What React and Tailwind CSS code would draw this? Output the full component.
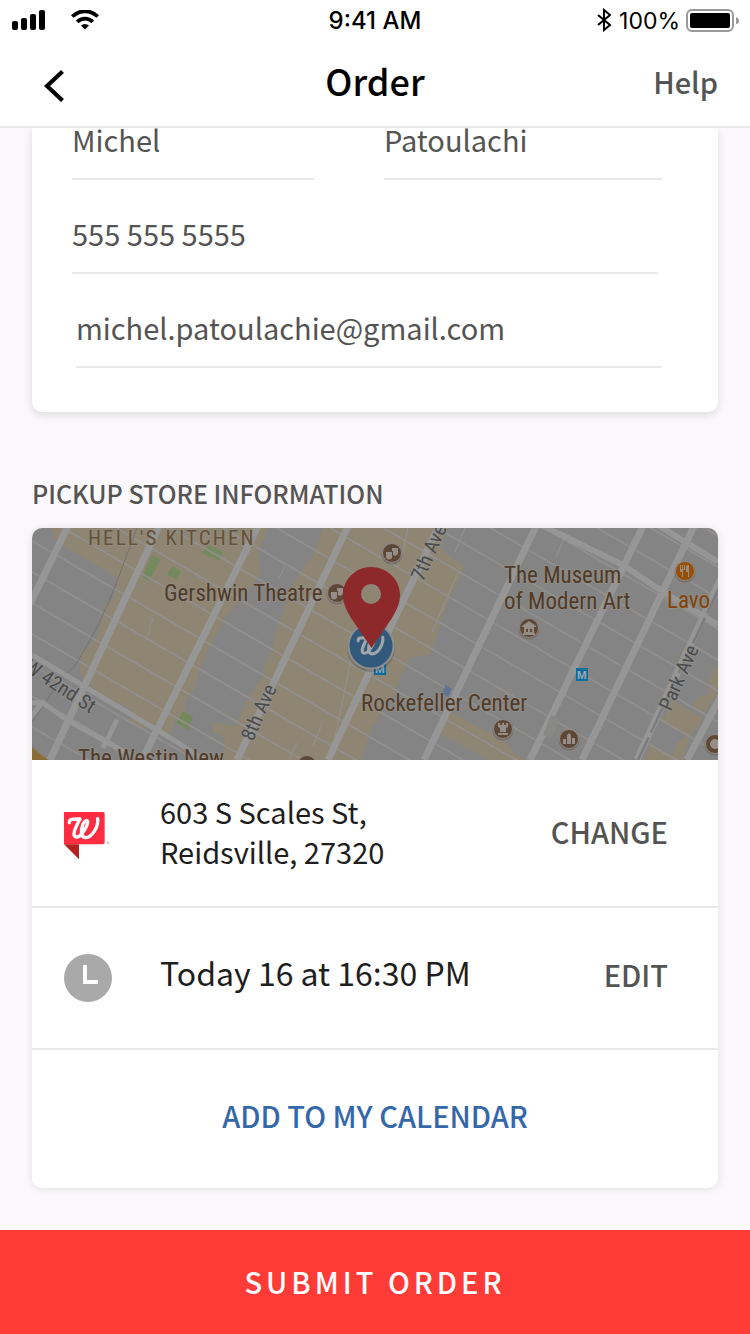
import React from "react";

const STREETS = Array.from({ length: 22 }, (_, i) => -390 + i * 31);

function ScriptW({ width }) {
  return (
    <path
      d="M16 32 C16 20 26 21 48 21 C39 38 30 54 30 65 C30 77 42 79 52 67 C61 56 70 40 71 31 C72 22 63 24 57 36 C49 57 50 77 65 77 C83 77 104 46 101 20"
      fill="none"
      stroke="currentColor"
      strokeWidth={width}
      strokeLinecap="round"
      strokeLinejoin="round"
    />
  );
}

function Poi({ x, y, children, color = "#5d4736" }) {
  return (
    <g transform={`translate(${x} ${y})`}>
      <circle cy="1" r="10.5" fill="#77706a" />
      <circle r="9.5" fill={color} stroke="#8f8983" strokeWidth="1" />
      <g fill="#958d86">{children}</g>
    </g>
  );
}

function Masks() {
  return (
    <>
      <path d="M-6-1h6v4a3 3 0 0 1-6 1z" />
      <path d="M0-5h6v5a3 3 0 0 1-5 2v-4H0z" />
    </>
  );
}

function StoreMap() {
  return (
    <svg viewBox="0 0 686 232" preserveAspectRatio="xMidYMid slice" className="block h-[232px] w-full" role="img" aria-label="Map of the pickup store">
      <rect width="686" height="232" fill="#848484" />
      <g fill="#8e8573">
        <path d="M19 0 25 14 51 29 86 50 81 72 73 74 66 107 56 120 50 122 48 140 50 149 65 164 71 167 100 182 98 195 111 201 118 197 138 207 143 194 153 184 153 174 163 160 168 140 175 124 183 110 190 94 201 80 212 68 228 46 226 26 236 0Z" />
        <path d="M291 0 281 28 265 48 253 78 245 101 241 121 233 135 231 148 216 171 203 198 181 194 180 204 193 210 190 232 328 232 335 214 341 197 350 184 361 167 371 144 378 130 398 127 408 97 415 77 433 40 408 20 416 0Z" />
        <path d="M418 184 468 210 491 232 458 232 406 205Z" />
        <path d="M640 172 671 190 658 210 630 194Z" />
        <path d="M686 137 678 147 676 167 665 169 661 179 671 187 686 164Z" />
        <path d="M618 217 635 227 641 227 645 214 658 207 651 232 613 232Z" />
      </g>
      <g fill="#748a5d">
        <path d="m120 27 9 4-12 22-7-4z" />
        <path d="m141 38 8 5-4 9-10-6z" />
        <path d="m176 17 15 7-3 9-18-8z" />
        <path d="m151 183 10 6-5 13-12-7z" />
      </g>
      <g stroke="#92908f" strokeWidth="1.6">
        {STREETS.map((y) => (
          <path key={y} d={`M0 ${y} 686 ${y + 398}`} />
        ))}
      </g>
      <g fill="none" stroke="#92908f" strokeWidth="1.2">
        <path d="m121 90-4 9 1 4-4 9M376 0l-6 28M433 0l-10 24M428 40l-28 64M323 112l-22 107M290 196l-9 22M265 215l-8 17M532 10l-8 19M253 38l-6 12" />
      </g>
      <path d="M105 0 84 56Q70 94 43 138L30 150 0 194" fill="none" stroke="#747270" />
      <g fill="none" stroke="#969696">
        <path d="M0 127 145 214 172 232M0 175 10 174 35 192 96 226M85 192 71 220M10 175-2 190" strokeWidth="5" />
        <path d="M507-4 591 37 628 62 686 97M624-4 686 34" strokeWidth="6" />
        <path d="M37-4-2 76M128-4 18 232M227-4 110 232" strokeWidth="7" />
        <path d="M317-4 205 232M408-4 361 94 296 232M505-4 392 232M612-4 498 232M663-4 550 232M690 48 605 232M690 166 655 232" strokeWidth="7" />
      </g>
      <path d="M687 60 606 232" stroke="#7c7c7c" strokeWidth="2.5" strokeDasharray="28 5" />
      <path d="m0 219 16 13H0z" fill="#8b6d38" />
      <path d="m414 157 6 4-4 8-6-4z" fill="#5f7396" />
      <path d="M519 187 528 192 519 211 511 207z" fill="#888886" />

      <g fontFamily="'Roboto Condensed', 'Liberation Sans Narrow', Roboto, sans-serif" fill="#4e3b2b" stroke="#969084" strokeWidth="2" strokeOpacity=".65" paintOrder="stroke" strokeLinejoin="round" fontSize="23">
        <text x="56" y="17" fontSize="21" fill="#645139" className="tracking-widest">HELL&apos;S KITCHEN</text>
        <text x="132" y="73">Gershwin Theatre</text>
        <text x="472" y="55">The Museum</text>
        <text x="472" y="81">of Modern Art</text>
        <text x="635" y="80" fill="#7d4309">Lavo</text>
        <text x="329" y="183">Rockefeller Center</text>
        <text x="46" y="238">The Westin New</text>
      </g>
      <g fontFamily="'Roboto Condensed', Roboto, sans-serif" fontSize="20" fill="#4b4b4b" stroke="#939393" strokeWidth="2" strokeOpacity=".6" paintOrder="stroke">
        <text transform="translate(-9 142) rotate(33)">W 42nd St</text>
        <text transform="translate(221 214) rotate(-66)">8th Ave</text>
        <text transform="translate(391 54) rotate(-66)">7th Ave</text>
        <text transform="translate(639 184) rotate(-66)">Park Ave</text>
      </g>

      <Poi x={360} y={25}><Masks /></Poi>
      <Poi x={305} y={65}><Masks /></Poi>
      <Poi x={497} y={100}>
        <path d="m-7-2 7-5 7 5v1H-7zM-6 5H6v2H-6zM-5-1H5v6H-5z" />
        <path d="M-3 1h2v3h-2zM1 1h2v3H1z" fill="#5d4736" />
      </Poi>
      <Poi x={471} y={201}>
        <path d="M-5-6h2v2h2v-2h2v2h2v-2h2v4L3-1 3 3H-3L-3-1-5-2zM-5 4H5v2H-5z" />
      </Poi>
      <Poi x={537} y={211}>
        <path d="M-6 0h3v5h-3zM-2-4 0-6 2-4V5H-2zM3-1h3v6H3z" />
      </Poi>
      <Poi x={683} y={216}><circle r="5" /></Poi>
      <Poi x={275} y={237}>{null}</Poi>
      <Poi x={653} y={43} color="#974f06">
        <path d="M-5-6h1v4h1v-4h1v4h1v-4h1v5h-2v7h-1V1h-2zM1-5q1-1 3-1V6H3V1H1z" />
      </Poi>
      <g fontFamily="Roboto, sans-serif" fontSize="11" fontWeight="700" fill="#98a8b1">
        <rect x="544" y="140" width="12" height="13" fill="#0b6c9d" />
        <text x="545" y="151">M</text>
        <rect x="342" y="134" width="12" height="13" fill="#0b6c9d" />
        <text x="343" y="145">M</text>
      </g>

      <circle cx="339" cy="120" r="24" fill="#000" opacity=".15" />
      <circle cx="339" cy="118" r="22.5" fill="#30597b" stroke="#8f8f8f" strokeWidth="2" />
      <g transform="translate(321.500 103.500) scale(.29)" className="text-[#a0a5aa]">
        <ScriptW width="11" />
      </g>
      <path fillRule="evenodd" d="M339 39C323.500 39 311 51.500 311 67 311 76 315 83 319 90L339.500 120 360 90C364 83 368 76 368 67 368 51.500 355 39 339 39ZM339 56a10 10 0 1 1 0 20 10 10 0 0 1 0-20Z" fill="#8e292b" />
    </svg>
  );
}

function StatusBar() {
  return (
    <div className="grid h-10 grid-cols-3 items-center pr-3 pl-3 font-['Inter','Liberation_Sans',sans-serif] text-[23px] leading-6 text-black">
      <div className="flex items-center gap-6">
        <svg viewBox="0 0 34 20" className="h-5 w-[34px]" aria-hidden="true">
          <rect y="11" width="6" height="9" rx="2" />
          <rect x="9" y="8" width="6" height="12" rx="2" />
          <rect x="18" y="4" width="6" height="16" rx="2" />
          <rect x="27" width="6" height="20" rx="2" />
        </svg>
        <svg viewBox="0 0 30 20" className="h-5 w-[30px]" aria-hidden="true">
          <path d="M2.300 6.500a18 18 0 0 1 25.400 0M7.200 11.800a11 11 0 0 1 15.600 0" fill="none" stroke="#000" strokeWidth="3.800" />
          <path d="m11 15.500a6 6 0 0 1 8 0l-4 4z" />
        </svg>
      </div>
      <span className="pt-[2px] text-center text-[24px] font-medium">9:41 AM</span>
      <div className="flex items-center justify-end">
        <svg viewBox="0 0 14 24" className="mr-2 h-6 w-[14px] shrink-0" aria-hidden="true">
          <path d="m1 7 12 10-6 5V2l6 5L1 17" fill="none" stroke="#000" strokeWidth="2" />
        </svg>
        <span className="mr-[6px] pt-[2px]">100%</span>
        <svg viewBox="0 0 54 24" className="-mr-[2px] h-6 w-[54px] shrink-0" aria-hidden="true">
          <rect x="1" y="2" width="46" height="21" rx="5" fill="none" stroke="#999" strokeWidth="2" />
          <rect x="4" y="5" width="40" height="15" rx="2" />
          <path d="M50 9q3 1 3 4t-3 3z" fill="#999" />
        </svg>
      </div>
    </div>
  );
}

function Field({ label, className, ...props }) {
  return (
    <input
      aria-label={label}
      className={`block h-[62px] min-w-0 border-b-2 border-[#e9e9e9] bg-transparent pb-[18px] text-[29px] leading-10 text-[#545454] outline-none ${className}`}
      {...props}
    />
  );
}

export default function App() {
  return (
    <div className="flex min-h-screen flex-col bg-[#faf8fb] font-['Source_Sans_Pro','Noto_Sans_CJK_SC',sans-serif] text-[#1e1e1e]">
      <header className="relative z-10 border-b-2 border-[#e9e9e9] bg-white">
        <StatusBar />
        <div className="grid h-[86px] grid-cols-3 items-center px-8">
          <button type="button" aria-label="Back" className="flex h-14 w-12 items-center pt-[6px] pl-3">
            <svg viewBox="0 0 20 32" className="h-8 w-5" aria-hidden="true">
              <path d="M18.500 1.500 3 16 18.500 30.500" fill="none" stroke="#000" strokeWidth="4.200" />
            </svg>
          </button>
          <h1 className="pb-[6px] text-center text-[36px] leading-[48px] font-medium text-black">Order</h1>
          <a href="#help" className="pb-1 text-right text-[29px] leading-10 font-medium text-[#545454]">Help</a>
        </div>
      </header>

      <main className="flex-1 px-8 pb-[42px]">
        <form className="rounded-b-[10px] bg-white pr-14 pb-11 pl-10 shadow-[0_3px_8px_rgba(0,0,0,0.12)]">
          <div className="flex gap-[70px] overflow-hidden">
            <Field label="First name" defaultValue="Michel" className="-mt-[10px] flex-[242]" />
            <Field label="Last name" defaultValue="Patoulachi" className="-mt-[10px] flex-[278]" />
          </div>
          <div className="flex pt-8 pr-1">
            <Field label="Phone number" type="tel" defaultValue="555 555 5555" className="flex-1" />
          </div>
          <div className="flex pt-8 pl-1">
            <Field label="Email" type="email" defaultValue="michel.patoulachie@gmail.com" className="flex-1" />
          </div>
        </form>

        <h2 className="mt-[65px] mb-[19px] text-[25px] leading-8 font-medium text-[#545454]">PICKUP STORE INFORMATION</h2>

        <section className="overflow-hidden rounded-[10px] bg-white shadow-[0_1px_8px_rgba(0,0,0,0.10)]">
          <StoreMap />
          <div className="flex h-[148px] items-center border-b-2 border-[#e9e9e9] pr-[50px] pl-8">
            <svg viewBox="0 0 144 144" className="mt-[6px] mr-12 h-12 w-12 shrink-0 text-white" aria-hidden="true">
              <path d="M0 0h118l4 4v89l-4 4H0z" fill="#ff2d42" />
              <path d="M0 97h45v45z" fill="#b5211d" />
              <ScriptW width="10" />
              <circle cx="132" cy="92" r="5" fill="#d5d5d5" />
            </svg>
            <address className="flex-1 pb-1 text-[29px] leading-10 not-italic">
              603 S Scales St,<br />Reidsville, 27320
            </address>
            <button type="button" className="pb-1 text-[29px] leading-10 font-medium text-[#545454]">CHANGE</button>
          </div>
          <div className="flex h-[142px] items-center border-b-2 border-[#e9e9e9] pr-[50px] pl-8">
            <svg viewBox="0 0 48 48" className="mr-12 h-12 w-12 shrink-0" aria-hidden="true">
              <circle cx="24" cy="24" r="24" fill="#a9a9a9" />
              <path d="M21 11v17h13" fill="none" stroke="#fff" strokeWidth="4" />
            </svg>
            <p className="flex-1 pb-3 text-[32px] leading-10">Today 16 at 16:30 PM</p>
            <button type="button" className="pb-2 text-[29px] leading-10 font-medium text-[#545454]">EDIT</button>
          </div>
          <button type="button" className="block h-[138px] w-full pb-2 text-[29px] leading-10 font-medium text-[#3568a8]">ADD TO MY CALENDAR</button>
        </section>
      </main>

      <button type="submit" className="h-[104px] w-full bg-[#ff3b38] pb-[2px] text-[29px] leading-10 font-medium tracking-[4px] text-white">SUBMIT ORDER</button>
    </div>
  );
}
